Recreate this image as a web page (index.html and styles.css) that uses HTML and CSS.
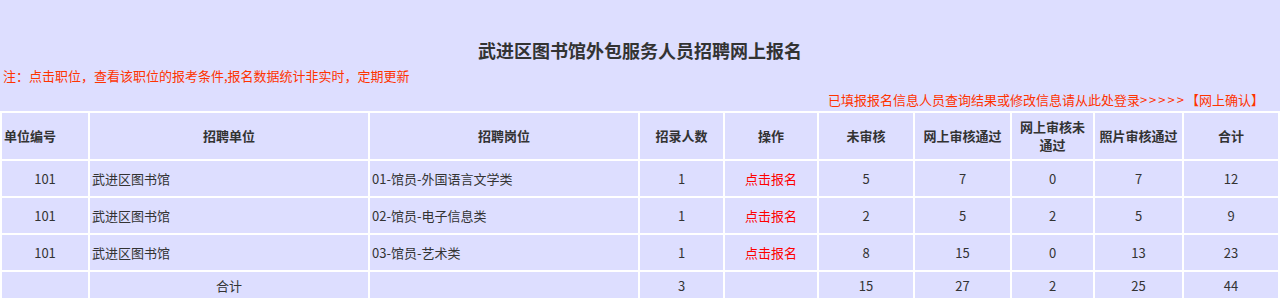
FILE: index.html
```html
<!DOCTYPE html>
<html lang="zh-CN">
<head>
<meta charset="utf-8">
<title>武进区图书馆外包服务人员招聘网上报名</title>
<link rel="stylesheet" href="styles.css">
</head>
<body>
<div class="page">
  <h1 class="title">武进区图书馆外包服务人员招聘网上报名</h1>
  <div class="note">注：点击职位，查看该职位的报考条件,报名数据统计非实时，定期更新</div>
  <div class="login"><a href="#">已填报报名信息人员查询结果或修改信息请从此处登录<span class="arrows">&gt;&gt;&gt;&gt;&gt;</span>【网上确认】</a></div>
  <table class="grid">
    <colgroup>
      <col class="c1"><col class="c2"><col class="c3"><col class="c4"><col class="c5">
      <col class="c6"><col class="c7"><col class="c8"><col class="c9"><col class="c10">
    </colgroup>
    <thead>
      <tr>
        <th class="left">单位编号</th>
        <th>招聘单位</th>
        <th>招聘岗位</th>
        <th>招录人数</th>
        <th>操作</th>
        <th>未审核</th>
        <th>网上审核通过</th>
        <th>网上审核未通过</th>
        <th>照片审核通过</th>
        <th>合计</th>
      </tr>
    </thead>
    <tbody>
      <tr>
        <td>101</td><td class="left">武进区图书馆</td><td class="left">01-馆员-外国语言文学类</td><td>1</td>
        <td><a class="apply" href="#">点击报名</a></td><td>5</td><td>7</td><td>0</td><td>7</td><td>12</td>
      </tr>
      <tr>
        <td>101</td><td class="left">武进区图书馆</td><td class="left">02-馆员-电子信息类</td><td>1</td>
        <td><a class="apply" href="#">点击报名</a></td><td>2</td><td>5</td><td>2</td><td>5</td><td>9</td>
      </tr>
      <tr>
        <td>101</td><td class="left">武进区图书馆</td><td class="left">03-馆员-艺术类</td><td>1</td>
        <td><a class="apply" href="#">点击报名</a></td><td>8</td><td>15</td><td>0</td><td>13</td><td>23</td>
      </tr>
      <tr class="total">
        <td></td><td>合计</td><td></td><td>3</td><td></td><td>15</td><td>27</td><td>2</td><td>25</td><td>44</td>
      </tr>
    </tbody>
  </table>
</div>
</body>
</html>
```
FILE: styles.css
```css
html, body {
  margin: 0;
  padding: 0;
  background: #dddeff;
}
body {
  font-family: "Microsoft YaHei", "Noto Sans CJK SC", "Noto Sans", sans-serif;
  font-size: 13px;
  color: #333;
}
.page {
  display: flex;
  flex-direction: column;
}
.title {
  margin: 0;
  padding-top: 38px;
  height: 24px;
  line-height: 24px;
  font-size: 18px;
  font-weight: bold;
  text-align: center;
  color: #333;
}
.note {
  margin-top: 5px;
  padding-left: 3px;
  line-height: 18px;
  color: #ff3300;
}
.login {
  margin-top: 6px;
  padding-right: 16px;
  line-height: 18px;
  text-align: right;
}
.login a {
  color: #ff3300;
  text-decoration: none;
}
.arrows {
  letter-spacing: 2px;
}
.grid {
  margin-top: 2px;
  width: 1280px;
  table-layout: fixed;
  border-collapse: separate;
  border-spacing: 2px;
  background: #ffffff;
}
.c1 { width: 86px; }
.c2 { width: 278px; }
.c3 { width: 268px; }
.c4 { width: 83px; }
.c5 { width: 92px; }
.c6 { width: 94px; }
.c7 { width: 95px; }
.c8 { width: 81px; }
.c9 { width: 87px; }
.c10 { width: 94px; }
.grid th,
.grid td {
  background: #dddeff;
  padding: 0 3px;
  text-align: center;
  vertical-align: middle;
  line-height: 18px;
  color: #333;
}
.grid th {
  height: 46px;
  font-weight: bold;
}
.grid td {
  height: 35px;
}
.grid .total td {
  height: 28px;
}
.grid .left {
  text-align: left;
}
.grid th.left {
  padding-left: 2px;
}
.grid td.left {
  padding-left: 2px;
}
.apply {
  color: #ff0000;
  text-decoration: none;
}
```
